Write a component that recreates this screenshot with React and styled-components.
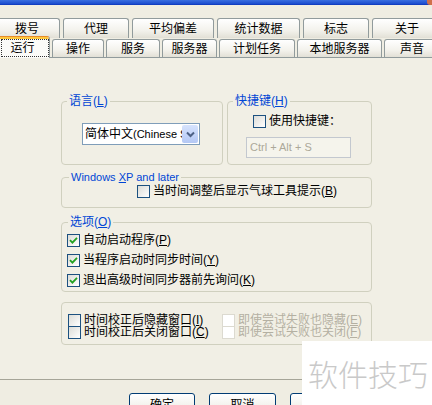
import styled, { createGlobalStyle } from 'styled-components';

const GlobalStyle = createGlobalStyle`
  html, body {
    margin: 0;
    padding: 0;
    overflow: hidden;
    background: #efede2;
  }
  body {
    font-family: Tahoma, "Liberation Sans", "Noto Sans CJK SC", sans-serif;
    font-size: 12px;
    color: #000;
  }
`;

const Window = styled.div`
  position: relative;
  width: 432px;
  height: 405px;
  overflow: hidden;
  background: #efede2;
`;

const TitleStrip = styled.div`
  display: flex;
  justify-content: flex-end;
  height: 5px;
  background: linear-gradient(#3a6fe0, #1d4fd0 70%, #0c35b8);
`;

const CloseEdge = styled.span`
  width: 5px;
  height: 5px;
  background: #d0704a;
  border-radius: 0 0 0 3px;
`;

const TabStrip = styled.div`
  padding-top: 13px;
`;

const TabRow = styled.div`
  display: flex;
  align-items: flex-end;
  gap: ${(p) => p.$gap}px;
  height: ${(p) => p.$height}px;
  margin-left: ${(p) => p.$offset}px;
`;

const Tab = styled.div`
  position: relative;
  flex: none;
  box-sizing: border-box;
  display: flex;
  align-items: center;
  justify-content: center;
  width: ${(p) => p.$width}px;
  height: ${(p) => (p.$active ? 22 : p.$tall ? 20 : 18)}px;
  margin-bottom: ${(p) => (p.$active ? -1 : 0)}px;
  z-index: ${(p) => (p.$active ? 2 : 0)};
  border: 1px solid #919b9c;
  border-bottom: none;
  border-radius: 3px 3px 0 0;
  background: ${(p) =>
    p.$active ? '#fbfbf8' : 'linear-gradient(#ffffff, #f3f2ec 60%, #e2e0d6)'};
  border-top-color: ${(p) => (p.$active ? '#e68b2c' : '#919b9c')};
  box-shadow: ${(p) => (p.$active ? 'inset 0 2px 0 #ffc83c' : 'none')};
  line-height: 14px;
  white-space: nowrap;
`;

const FocusLabel = styled.span`
  padding: 1px 13px 1px 8px;
  margin-left: 4px;
  outline: 1px dotted #333;
`;

const Pane = styled.div`
  box-sizing: border-box;
  width: 440px;
  height: 323px;
  padding: 36px 0 0 61px;
  border-top: 1px solid #919b9c;
  border-bottom: 1px solid #a6a598;
  background: #f1efe5;
`;

const GroupRow = styled.div`
  display: flex;
  gap: 4px;
`;

const GroupBox = styled.fieldset`
  box-sizing: border-box;
  width: ${(p) => p.$width}px;
  height: ${(p) => p.$height}px;
  margin: ${(p) => p.$top || 0}px 0 0;
  padding: 0;
  border: 1px solid #d0d0bf;
  border-radius: 4px;
  min-inline-size: 0;
`;

const PlainBox = styled.div`
  box-sizing: border-box;
  width: ${(p) => p.$width}px;
  height: ${(p) => p.$height}px;
  margin-top: ${(p) => p.$top || 0}px;
  border: 1px solid #d0d0bf;
  border-radius: 4px;
`;

const Caption = styled.legend`
  margin-left: ${(p) => p.$indent || 5}px;
  padding: 0 2px;
  color: #0046d5;
  font-size: ${(p) => p.$size || 12}px;
  line-height: 14px;
`;

const GroupBody = styled.div`
  padding: ${(p) => p.$pad};
`;

const Select = styled.div`
  box-sizing: border-box;
  display: flex;
  align-items: center;
  width: 118px;
  height: 22px;
  border: 1px solid #7f9db9;
  background: #fff;
  overflow: hidden;
  font-size: 11px;
`;

const SelectText = styled.span`
  flex: 1;
  padding-left: 2px;
  overflow: hidden;
  white-space: nowrap;
  line-height: 14px;
`;

const Cjk = styled.span`
  font-size: 12px;
`;

const DropButton = styled.span`
  flex: none;
  display: flex;
  align-items: center;
  justify-content: center;
  width: 16px;
  height: 18px;
  margin-right: 1px;
  border-radius: 2px;
  background: linear-gradient(#d6e3fd, #b4c8f4);
`;

const TextField = styled.div`
  box-sizing: border-box;
  width: 105px;
  height: 21px;
  margin: 9px 0 0 18px;
  padding-left: 3px;
  border: 1px solid #c3c8cf;
  background: #f5f4ec;
  color: #aca899;
  font-size: 11px;
  line-height: 19px;
  font-family: Tahoma, "Liberation Sans", sans-serif;
`;

const CheckRow = styled.div`
  display: flex;
  align-items: ${(p) => (p.$tight ? 'flex-start' : 'center')};
  gap: 3px;
  height: ${(p) => p.$height || 20}px;
  color: ${(p) => (p.$disabled ? '#b4b0a2' : '#000')};
  line-height: ${(p) => (p.$tight ? 12 : 13)}px;
  white-space: nowrap;
`;

const Box = styled.span`
  flex: none;
  box-sizing: border-box;
  display: flex;
  align-items: center;
  justify-content: center;
  width: 13px;
  height: 13px;
  border: 1px solid ${(p) => (p.$disabled ? '#dcdad0' : '#1c5180')};
  background: ${(p) =>
    p.$disabled ? '#ffffff' : 'linear-gradient(135deg, #dcdcd7, #ffffff)'};
`;

const TwoColumns = styled.div`
  display: grid;
  grid-template-columns: 154px auto;
  row-gap: 0;
`;

const Footer = styled.div`
  display: flex;
  gap: 14px;
  padding: 13px 0 0 129px;
`;

const Button = styled.div`
  box-sizing: border-box;
  display: flex;
  justify-content: center;
  width: ${(p) => p.$width}px;
  height: 23px;
  padding-top: 4px;
  border: 1px solid #003c74;
  border-radius: 3px;
  background: linear-gradient(#ffffff, #f0efe8 70%, #dcd9cc);
  line-height: 14px;
`;

const Watermark = styled.div`
  position: absolute;
  left: 302px;
  top: 341px;
  width: 130px;
  height: 64px;
  display: flex;
  align-items: center;
  padding-left: 6px;
  box-sizing: border-box;
  background: #fff;
  color: #c9c9c9;
  font-family: "Noto Sans CJK SC", sans-serif;
  font-size: 30px;
  font-weight: 300;
`;

const backTabs = [
  ['拨号', 66],
  ['代理', 66],
  ['平均偏差', 82],
  ['统计数据', 83],
  ['标志', 66],
  ['关于', 70]
];

const frontTabs = [
  ['运行', 54],
  ['操作', 52],
  ['服务', 54],
  ['服务器', 55],
  ['计划任务', 76],
  ['本地服务器', 85],
  ['声音', 56]
];

const Tick = () => (
  <svg width="9" height="9" viewBox="0 0 9 9">
    <path d="M1 4.2 L3.4 6.6 L8 1.8" fill="none" stroke="#21a121" strokeWidth="1.8" />
  </svg>
);

const Arrow = () => (
  <svg width="9" height="7" viewBox="0 0 9 7">
    <path d="M1 1.5 L4.5 5 L8 1.5" fill="none" stroke="#4d6185" strokeWidth="2" />
  </svg>
);

const Check = ({ checked, disabled, tight, height, children }) => (
  <CheckRow $disabled={disabled} $tight={tight} $height={height}>
    <Box $disabled={disabled}>{checked && <Tick />}</Box>
    <span>{children}</span>
  </CheckRow>
);

const App = () => {
  return (
    <Window>
      <GlobalStyle />
      <TitleStrip>
        <CloseEdge />
      </TitleStrip>

      <TabStrip>
        <TabRow $offset={-6} $gap={3} $height={20}>
          {backTabs.map(([label, width]) => (
            <Tab key={label} $width={width} $tall>
              {label}
            </Tab>
          ))}
        </TabRow>
        <TabRow $offset={-4} $gap={2} $height={19}>
          {frontTabs.map(([label, width], i) =>
            i === 0 ? (
              <Tab key={label} $width={width} $active>
                <FocusLabel>{label}</FocusLabel>
              </Tab>
            ) : (
              <Tab key={label} $width={width}>
                {label}
              </Tab>
            )
          )}
        </TabRow>
      </TabStrip>

      <Pane>
        <GroupRow>
          <GroupBox $width={162} $height={71}>
            <Caption $indent={5}>
              语言(<u>L</u>)
            </Caption>
            <GroupBody $pad="15px 0 0 20px">
              <Select>
                <SelectText>
                  <Cjk>简体中文</Cjk>(Chinese Simplified)
                </SelectText>
                <DropButton>
                  <Arrow />
                </DropButton>
              </Select>
            </GroupBody>
          </GroupBox>
          <GroupBox $width={145} $height={71}>
            <Caption $indent={5}>
              快捷键(<u>H</u>)
            </Caption>
            <GroupBody $pad="7px 0 0 25px">
              <Check height={13}>使用快捷键：</Check>
            </GroupBody>
            <TextField>Ctrl + Alt + S</TextField>
          </GroupBox>
        </GroupRow>

        <GroupBox $width={311} $height={38} $top={5}>
          <Caption $indent={7} $size={11}>
            Windows <u>X</u>P and later
          </Caption>
          <GroupBody $pad="1px 0 0 75px">
            <Check height={13}>
              当时间调整后显示气球工具提示(<u>B</u>)
            </Check>
          </GroupBody>
        </GroupBox>

        <GroupBox $width={311} $height={77} $top={7}>
          <Caption $indent={6}>
            选项(<u>O</u>)
          </Caption>
          <GroupBody $pad="1px 0 0 5px">
            <Check checked>
              自动启动程序(<u>P</u>)
            </Check>
            <Check checked>
              当程序启动时同步时间(<u>Y</u>)
            </Check>
            <Check checked>
              退出高级时间同步器前先询问(<u>K</u>)
            </Check>
          </GroupBody>
        </GroupBox>

        <PlainBox $width={311} $height={43} $top={10}>
          <GroupBody $pad="11px 0 0 6px">
            <TwoColumns>
              <Check tight height={12}>
                时间校正后隐藏窗口(<u>I</u>)
              </Check>
              <Check tight height={12} disabled>
                即使尝试失败也隐藏(<u>E</u>)
              </Check>
              <Check tight height={12}>
                时间校正后关闭窗口(<u>C</u>)
              </Check>
              <Check tight height={12} disabled>
                即使尝试失败也关闭(<u>F</u>)
              </Check>
            </TwoColumns>
          </GroupBody>
        </PlainBox>
      </Pane>

      <Footer>
        <Button $width={66}>确定</Button>
        <Button $width={67}>取消</Button>
        <Button $width={67}>应用</Button>
      </Footer>

      <Watermark>软件技巧</Watermark>
    </Window>
  );
};

export default App;
